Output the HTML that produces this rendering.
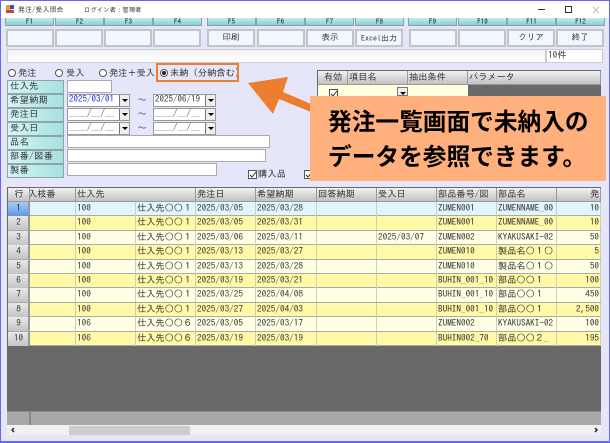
<!DOCTYPE html>
<html lang="ja"><head><meta charset="utf-8"><title>発注/受入照会</title>
<style>
html,body{margin:0;padding:0}
#w{position:relative;width:610px;height:443px;overflow:hidden;background:#e6e6fa;font:9.2px/14px "IPAGothic","Liberation Sans","Noto Sans CJK JP",sans-serif;color:#333}
#w div,#w span.a{position:absolute;box-sizing:border-box;white-space:nowrap}
.fh{top:18px;height:8px;background:linear-gradient(#c4eeee,#8fcccc);border:1px solid #7fa8a8;border-top:0;text-align:center;font-size:7px;line-height:7px;width:49px;color:#111}
.bt{top:29px;height:18px;width:48px;background:#f0f8ff;border:2px solid #c4c4c4;text-align:center;line-height:14px;font-size:8.5px}
.lb{left:7px;width:57px;height:14px;background:linear-gradient(90deg,#d6f4f4,#a6e0e0);border:1px solid #8fa6a6;padding-left:2px;line-height:12px;letter-spacing:.4px}
.in{left:67px;height:13px;background:#fff;border:1px solid #aaa}
.dt{height:13px;background:#fff;border:1px solid #999;width:63px;padding-left:1px;line-height:10px;font-size:9px}
.dt i{position:absolute;right:0;top:0;width:9px;height:11px;background:#eee;border-left:1px solid #777}
.dt i:after{content:"";position:absolute;left:1.5px;top:4px;border:3px solid transparent;border-top:3px solid #000;border-bottom:0}
.t{left:135px;width:14px;text-align:center}
.ra{top:69px;width:8px;height:8px;border:1px solid #555;border-radius:50%;background:#fff}
.rt{top:67px}
.gh{background:linear-gradient(#f2f2f2,#c2c2c2);border-right:1px solid #999;border-bottom:1px solid #999;height:14px;line-height:13px;padding-left:1px;overflow:hidden}
.r{left:8px;width:593px;height:14.4px;border-bottom:1px solid #aaa}
.r b{font-weight:400;position:absolute;top:0;height:14px;line-height:14px;padding-left:1px;border-right:1px solid #d0d0b0;overflow:hidden;box-sizing:border-box}
.o{background:#ffffe6}.e{background:#fff9a8}.s{background:#e0f6ff}
.n{left:0;width:22px;text-align:center;background:linear-gradient(#e8e8e8,#c4c4c4);border-right:2px solid #999!important}
.s .n{background:linear-gradient(#a8ccf4,#5b9ae0);color:#123}
.c1{left:22px;width:46px}.c2{left:68px;width:60px}.c3{left:128px;width:60px}.c4{left:188px;width:60px}.c5{left:248px;width:61px}.c6{left:309px;width:60px}.c7{left:369px;width:60px}.c8{left:429px;width:60px}.c9{left:489px;width:60px}.c10{left:549px;width:44px;text-align:right;padding-right:1px}
.ch{width:9px;height:9px;border:1px solid #555;background:#fff}
</style></head><body><div id="w">
<div style="left:0;top:0;width:610px;height:18px;background:#fff"></div>
<div style="left:0;top:0;width:610px;height:1px;background:#6666f0"></div>
<div style="left:0;top:0;width:1px;height:443px;background:#6666f0"></div>
<div style="left:609px;top:0;width:1px;height:443px;background:#6666f0"></div>
<div style="left:0;top:441px;width:610px;height:2px;background:#6666f0"></div>
<div style="left:6px;top:5px;width:5px;height:5px;background:#e8a030"></div><div style="left:10px;top:5px;width:4px;height:4px;background:#3050c0"></div><div style="left:6px;top:10px;width:8px;height:3px;background:#d04030"></div>
<div style="left:18px;top:3px;font-size:7px">発注/受入照会</div><div style="left:84px;top:3px;font-size:6.4px">ログイン者：管理者</div>
<div style="left:538px;top:9px;width:7px;height:1px;background:#333"></div><div style="left:565px;top:6px;width:7px;height:7px;border:1px solid #333"></div>
<svg style="position:absolute;left:592px;top:6px" width="8" height="8"><path d="M1 1L7 7M7 1L1 7" stroke="#c0c0c0" fill="none"/></svg>

<div class="fh" style="left:5px">F1</div><div class="fh" style="left:55px">F2</div><div class="fh" style="left:104px">F3</div><div class="fh" style="left:153px">F4</div>
<div class="fh" style="left:207px">F5</div><div class="fh" style="left:256px">F6</div><div class="fh" style="left:305px">F7</div><div class="fh" style="left:355px">F8</div>
<div class="fh" style="left:408px">F9</div><div class="fh" style="left:458px">F10</div><div class="fh" style="left:507px">F11</div><div class="fh" style="left:556px">F12</div>

<div class="bt" style="left:6px"></div><div class="bt" style="left:55px"></div><div class="bt" style="left:104px"></div><div class="bt" style="left:153px"></div>
<div class="bt" style="left:207px">印刷</div><div class="bt" style="left:257px"></div><div class="bt" style="left:306px">表示</div><div class="bt" style="left:355px;font-size:8px">Excel出力</div>
<div class="bt" style="left:409px"></div><div class="bt" style="left:458px"></div><div class="bt" style="left:507px">クリア</div><div class="bt" style="left:556px">終了</div>

<div style="left:7px;top:49px;width:539px;height:14px;background:linear-gradient(#f4f4f4,#fff);border:1px solid #ccc"></div>
<div style="left:546px;top:49px;width:57px;height:14px;background:#fff;border:1px solid #ccc;line-height:12px;padding-left:1px">10件</div>

<div class="ra" style="left:8px"></div><div class="rt" style="left:18px">発注</div>
<div class="ra" style="left:55px"></div><div class="rt" style="left:66px">受入</div>
<div class="ra" style="left:99px"></div><div class="rt" style="left:109px">発注＋受入</div>
<div class="ra" style="left:160px"></div><div style="left:162px;top:71px;width:4px;height:4px;border-radius:50%;background:#222"></div><div class="rt" style="left:170px;letter-spacing:.1px">未納（分納含む）</div>
<div style="left:156px;top:63px;width:83px;height:19px;border:2px solid #ed7d31"></div>

<div class="lb" style="top:80px">仕入先</div><div class="lb" style="top:94px">希望納期</div><div class="lb" style="top:108px">発注日</div><div class="lb" style="top:122px">受入日</div><div class="lb" style="top:136px">品名</div><div class="lb" style="top:150px">部番/図番</div><div class="lb" style="top:164px">製番</div>
<div class="in" style="top:80px;width:45px"></div>
<div class="dt" style="left:67px;top:94px;color:#2222ee">2025/03/01<i></i></div><div class="t" style="top:94px">～</div><div class="dt" style="left:153px;top:94px">2025/06/19<i></i></div>
<div class="dt" style="left:67px;top:108px">____/__/__<i></i></div><div class="t" style="top:108px">～</div><div class="dt" style="left:153px;top:108px">____/__/__<i></i></div>
<div class="dt" style="left:67px;top:122px">____/__/__<i></i></div><div class="t" style="top:122px">～</div><div class="dt" style="left:153px;top:122px">____/__/__<i></i></div>
<div class="in" style="top:135px;width:203px"></div><div class="in" style="top:149px;width:199px"></div><div class="in" style="top:163px;width:150px"></div>
<div class="ch" style="left:248px;top:170px"></div><svg style="position:absolute;left:249px;top:171px" width="8" height="8"><path d="M1 4L3 6L7 1" stroke="#333" fill="none"/></svg><div style="left:258px;top:168px;letter-spacing:.2px">購入品</div>
<div class="ch" style="left:304px;top:170px"></div><svg style="position:absolute;left:305px;top:171px" width="8" height="8"><path d="M1 4L3 6L7 1" stroke="#333" fill="none"/></svg>

<div style="left:317px;top:70px;width:284px;height:30px;background:#696969"></div>
<div class="gh" style="left:318px;top:71px;width:30px;text-align:center">有効</div><div class="gh" style="left:348px;top:71px;width:60px">項目名</div><div class="gh" style="left:408px;top:71px;width:60px">抽出条件</div><div class="gh" style="left:468px;top:71px;width:133px">パラメータ</div>
<div style="left:318px;top:85px;width:150px;height:15px;background:#ffffe0"></div>
<div class="ch" style="left:329px;top:89px"></div><svg style="position:absolute;left:330px;top:90px" width="8" height="8"><path d="M1 4L3 6L7 1" stroke="#333" fill="none"/></svg>
<div class="dt" style="left:397px;top:87px;width:11px;height:9px;border:1px solid #777;padding:0"><i style="width:9px;height:7px;border:0"></i></div>

<div style="left:7px;top:187px;width:594px;height:238px;background:#696969"></div>
<div class="gh" style="left:8px;top:188px;width:22px;text-align:center">行</div><div class="gh" style="left:30px;top:188px;width:46px;text-indent:-3px">入枝番</div><div class="gh" style="left:76px;top:188px;width:120px">仕入先</div><div class="gh" style="left:196px;top:188px;width:60px">発注日</div><div class="gh" style="left:256px;top:188px;width:61px">希望納期</div><div class="gh" style="left:317px;top:188px;width:60px">回答納期</div><div class="gh" style="left:377px;top:188px;width:60px">受入日</div><div class="gh" style="left:437px;top:188px;width:60px">部品番号/図</div><div class="gh" style="left:497px;top:188px;width:60px">部品名</div><div class="gh" style="left:557px;top:188px;width:44px;padding-left:33px">発注</div>

<div class="r s" style="top:202px"><b class="n">1</b><b class="c1"></b><b class="c2">100</b><b class="c3">仕入先○○１</b><b class="c4">2025/03/05</b><b class="c5">2025/03/28</b><b class="c6"></b><b class="c7"></b><b class="c8">ZUMEN001</b><b class="c9">ZUMENNAME_00</b><b class="c10">10</b></div>
<div class="r e" style="top:216.4px"><b class="n">2</b><b class="c1"></b><b class="c2">100</b><b class="c3">仕入先○○１</b><b class="c4">2025/03/05</b><b class="c5">2025/03/31</b><b class="c6"></b><b class="c7"></b><b class="c8">ZUMEN001</b><b class="c9">ZUMENNAME_00</b><b class="c10">10</b></div>
<div class="r o" style="top:230.8px"><b class="n">3</b><b class="c1"></b><b class="c2">100</b><b class="c3">仕入先○○１</b><b class="c4">2025/03/06</b><b class="c5">2025/03/11</b><b class="c6"></b><b class="c7">2025/03/07</b><b class="c8">ZUMEN002</b><b class="c9">KYAKUSAKI-02</b><b class="c10">50</b></div>
<div class="r e" style="top:245.2px"><b class="n">4</b><b class="c1"></b><b class="c2">100</b><b class="c3">仕入先○○１</b><b class="c4">2025/03/13</b><b class="c5">2025/03/27</b><b class="c6"></b><b class="c7"></b><b class="c8">ZUMEN010</b><b class="c9">製品名○１○</b><b class="c10">5</b></div>
<div class="r o" style="top:259.6px"><b class="n">5</b><b class="c1"></b><b class="c2">100</b><b class="c3">仕入先○○１</b><b class="c4">2025/03/13</b><b class="c5">2025/03/28</b><b class="c6"></b><b class="c7"></b><b class="c8">ZUMEN010</b><b class="c9">製品名○１○</b><b class="c10">50</b></div>
<div class="r e" style="top:274px"><b class="n">6</b><b class="c1"></b><b class="c2">100</b><b class="c3">仕入先○○１</b><b class="c4">2025/03/19</b><b class="c5">2025/03/21</b><b class="c6"></b><b class="c7"></b><b class="c8">BUHIN_001_10</b><b class="c9">部品○○１</b><b class="c10">100</b></div>
<div class="r o" style="top:288.4px"><b class="n">7</b><b class="c1"></b><b class="c2">100</b><b class="c3">仕入先○○１</b><b class="c4">2025/03/25</b><b class="c5">2025/04/08</b><b class="c6"></b><b class="c7"></b><b class="c8">BUHIN_001_10</b><b class="c9">部品○○１</b><b class="c10">450</b></div>
<div class="r e" style="top:302.8px"><b class="n">8</b><b class="c1"></b><b class="c2">100</b><b class="c3">仕入先○○１</b><b class="c4">2025/03/27</b><b class="c5">2025/04/03</b><b class="c6"></b><b class="c7"></b><b class="c8">BUHIN_001_10</b><b class="c9">部品○○１</b><b class="c10">2,500</b></div>
<div class="r o" style="top:317.2px"><b class="n">9</b><b class="c1"></b><b class="c2">106</b><b class="c3">仕入先○○６</b><b class="c4">2025/03/05</b><b class="c5">2025/03/17</b><b class="c6"></b><b class="c7"></b><b class="c8">ZUMEN002</b><b class="c9">KYAKUSAKI-02</b><b class="c10">100</b></div>
<div class="r e" style="top:331.6px"><b class="n">10</b><b class="c1"></b><b class="c2">106</b><b class="c3">仕入先○○６</b><b class="c4">2025/03/19</b><b class="c5">2025/03/19</b><b class="c6"></b><b class="c7"></b><b class="c8">BUHIN002_70</b><b class="c9">部品○○２_</b><b class="c10">195</b></div>

<div style="left:7px;top:411px;width:594px;height:14px;background:#a9a9a9;border-top:1px solid #888"></div>
<div style="left:29px;top:412px;width:2px;height:13px;background:#888"></div>
<div style="left:7px;top:425px;width:594px;height:10px;background:#f0f0f0"></div>
<div style="left:69px;top:426px;width:121px;height:9px;background:#cdcdcd"></div>
<svg style="position:absolute;left:10px;top:427px" width="6" height="6"><path d="M4 1L2 3L4 5" stroke="#222" stroke-width="1.4" fill="none"/></svg>
<svg style="position:absolute;left:593px;top:427px" width="6" height="6"><path d="M2 1L4 3L2 5" stroke="#222" stroke-width="1.4" fill="none"/></svg>

<svg style="position:absolute;left:0;top:0" width="610" height="443"><polygon points="248,83 288,77 283,92 311,104 311,112 279,99 273,114" fill="#ed7d31"/></svg>
<div style="left:310px;top:96px;width:296px;height:85px;background:#ffb07c"></div>
<div style="left:328px;top:103px;font:700 23.7px/35px 'Noto Sans CJK JP',sans-serif;color:#000">発注一覧画面で未納入の<br>データを参照できます。</div>
</div></body></html>
